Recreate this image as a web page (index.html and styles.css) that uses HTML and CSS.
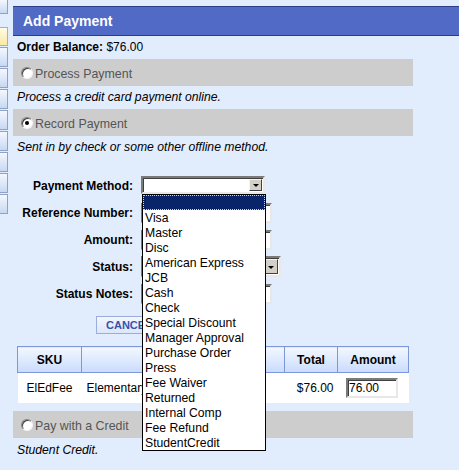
FILE: index.html
```html
<!DOCTYPE html>
<html>
<head>
<meta charset="utf-8">
<link rel="stylesheet" href="styles.css">
</head>
<body>
<div class="page">
  <nav class="rail">
    <span class="tab first"></span>
    <span class="tab active"></span>
    <span class="tab"></span>
    <span class="tab"></span>
    <span class="tab"></span>
    <span class="tab"></span>
    <span class="tab"></span>
    <span class="tab"></span>
    <span class="tab"></span>
    <span class="tab"></span>
  </nav>
  <main class="main">
    <div class="hdr">Add Payment</div>
    <p class="balance"><b>Order Balance:</b> $76.00</p>
    <div class="bar"><span class="radio"></span><span class="bar-label">Process Payment</span></div>
    <p class="note">Process a credit card payment online.</p>
    <div class="bar"><span class="radio on"></span><span class="bar-label">Record Payment</span></div>
    <p class="note last">Sent in by check or some other offline method.</p>

    <div class="form">
      <label class="lbl">Payment Method:</label>
      <div class="field">
        <div class="select pm"><span class="sel-val"></span><span class="sel-btn"><span class="tri"></span></span>
          <ul class="list">
            <li class="hl"></li>
            <li>Visa</li>
            <li>Master</li>
            <li>Disc</li>
            <li>American Express</li>
            <li>JCB</li>
            <li>Cash</li>
            <li>Check</li>
            <li>Special Discount</li>
            <li>Manager Approval</li>
            <li>Purchase Order</li>
            <li>Press</li>
            <li>Fee Waiver</li>
            <li>Returned</li>
            <li>Internal Comp</li>
            <li>Fee Refund</li>
            <li>StudentCredit</li>
          </ul>
        </div>
      </div>
      <label class="lbl">Reference Number:</label>
      <div class="field"><span class="input"></span></div>
      <label class="lbl">Amount:</label>
      <div class="field"><span class="input"></span></div>
      <label class="lbl">Status:</label>
      <div class="field"><div class="select st"><span class="sel-val"></span><span class="sel-btn"><span class="tri"></span></span></div></div>
      <label class="lbl">Status Notes:</label>
      <div class="field"><span class="input"></span></div>
    </div>

    <div class="actions"><button class="btn">CANCEL</button></div>

    <table class="items">
      <thead>
        <tr><th class="c-sku">SKU</th><th class="c-desc"></th><th class="c-tot">Total</th><th class="c-amt">Amount</th></tr>
      </thead>
      <tbody>
        <tr><td class="c-sku">ElEdFee</td><td class="c-desc">Elementary</td><td class="c-tot">$76.00</td><td class="c-amt"><span class="amt-input">76.00</span></td></tr>
      </tbody>
    </table>

    <div class="bar credit"><span class="radio"></span><span class="bar-label">Pay with a Credit</span></div>
    <p class="note final">Student Credit.</p>
  </main>
</div>
</body>
</html>
```

FILE: styles.css
```css
html, body { margin: 0; padding: 0; }
body {
  background: #e1ecfd;
  font: 12px "Liberation Sans", Arial, sans-serif;
  color: #000;
  width: 459px;
  height: 470px;
  overflow: hidden;
}
.page { display: flex; align-items: flex-start; }

.rail { width: 8px; margin-right: 5px; display: flex; flex-direction: column; gap: 1px; }
.tab {
  display: block;
  height: 18px;
  border: 1px solid #8ea2c8;
  border-left: none;
  background: linear-gradient(#f4f8ff, #c8d8f2);
}
.tab.first { height: 13px; border-top: none; margin-bottom: 12px; }
.tab.active { height: 17px; border-color: #d2b04c; background: linear-gradient(#fffbe6, #fbe9a4); }

.main { width: 446px; padding-top: 6px; }

.hdr {
  height: 28px;
  border-top: 1px solid #2b3c8a;
  border-bottom: 1px solid #2b3c8a;
  background: #506ac6;
  color: #fff;
  font-weight: bold;
  font-size: 14px;
  line-height: 28px;
  padding-left: 10px;
}
.balance { margin: 4px 0 5px 4px; line-height: 14px; }

.bar {
  width: 400px;
  height: 27px;
  box-sizing: border-box;
  background: #cdcdcd;
  display: flex;
  align-items: center;
  padding-left: 8px;
  color: #555;
  font-size: 12.4px;
}
.bar-label { margin-left: 2px; margin-top: 3px; }
.radio {
  width: 12px;
  height: 12px;
  box-sizing: border-box;
  border-radius: 50%;
  background: #fff;
  border: 1px solid;
  border-color: #808080 #f4f4f4 #f4f4f4 #808080;
  box-shadow: inset 1px 1px 0 #404040;
  position: relative;
}
.radio.on::after {
  content: "";
  position: absolute;
  left: 3px; top: 3px;
  width: 4px; height: 4px;
  border-radius: 50%;
  background: #000;
}
.note { margin: 4px 0 5px 4px; line-height: 14px; font-style: italic; font-size: 12.2px; }
.note.last { margin-bottom: 18px; }
.note.final { margin-top: 5px; }

.form {
  display: grid;
  grid-template-columns: 120px auto;
  grid-auto-rows: 27px;
  column-gap: 8px;
  align-items: center;
}
.lbl { justify-self: end; font-weight: bold; line-height: 14px; }
.field { display: flex; align-items: center; }

.input {
  display: block;
  width: 131px;
  height: 20px;
  box-sizing: border-box;
  background: #fff;
  border: 2px solid;
  border-color: #7a7a7a #e8e8e8 #e8e8e8 #7a7a7a;
  box-shadow: inset 1px 1px 0 #404040;
}
.select {
  position: relative;
  display: flex;
  justify-content: flex-end;
  align-items: center;
  box-sizing: border-box;
  background: #fff;
  border: 2px solid;
  border-color: #7a7a7a #e8e8e8 #e8e8e8 #7a7a7a;
  box-shadow: inset 1px 1px 0 #404040;
  padding: 1px;
}
.select.pm { width: 124px; height: 18px; margin-top: -1px; }
.select.st { width: 140px; height: 21px; }
.sel-val { flex: 1; }
.sel-btn {
  width: 13px;
  height: 100%;
  box-sizing: border-box;
  background: #d4d0c8;
  border: 1px solid;
  border-color: #f4f4f4 #404040 #404040 #f4f4f4;
  display: flex;
  align-items: center;
  justify-content: center;
}
.select.st .sel-btn { width: 15px; }
.tri {
  width: 0; height: 0;
  border-left: 3px solid transparent;
  border-right: 3px solid transparent;
  border-top: 3px solid #000;
  margin-top: 1px;
}
.list {
  position: absolute;
  left: -1px;
  top: 16px;
  width: 122px;
  margin: 0;
  padding: 0;
  list-style: none;
  background: #fff;
  border: 1px solid #000;
  z-index: 10;
}
.list li {
  height: 15px;
  line-height: 16px;
  padding-left: 2px;
  white-space: nowrap;
  font-size: 12.2px;
}
.list li.hl {
  background: #0a246a;
  outline: 1px dotted #e8d8a0;
  outline-offset: -1px;
}

.actions { margin-top: 9px; padding-left: 83px; display: flex; gap: 6px; }
.btn {
  height: 18px;
  padding: 0 9px;
  font: bold 11px "Liberation Sans", Arial, sans-serif;
  color: #3553a8;
  background: linear-gradient(#f2f6fe, #dce7fb);
  border: 1px solid #9aaedb;
}

.items {
  margin: 12px 0 8px 4px;
  width: 392px;
  border-collapse: collapse;
  table-layout: fixed;
}
.items th {
  height: 25px;
  border: 1px solid #7d97dd;
  background: linear-gradient(#f3f7ff, #c9dcfc);
  font-weight: bold;
  padding: 0;
}
.items td {
  height: 30px;
  padding: 0;
  background: #fff;
  white-space: nowrap;
  overflow: hidden;
}
.c-sku { width: 63px; text-align: center; }
.c-desc { width: 202px; }
td.c-desc { padding-left: 5px; }
.c-tot { width: 52px; text-align: center; }
td.c-tot { text-align: right; padding-right: 4px; }
.c-amt { width: 70px; text-align: center; }
.amt-input {
  display: inline-block;
  width: 52px;
  height: 20px;
  box-sizing: border-box;
  text-align: left;
  line-height: 16px;
  padding-left: 1px;
  background: #fff;
  border: 2px solid;
  border-color: #7a7a7a #e8e8e8 #e8e8e8 #7a7a7a;
  box-shadow: inset 1px 1px 0 #404040;
  vertical-align: middle;
  margin-left: -2px;
}
```
